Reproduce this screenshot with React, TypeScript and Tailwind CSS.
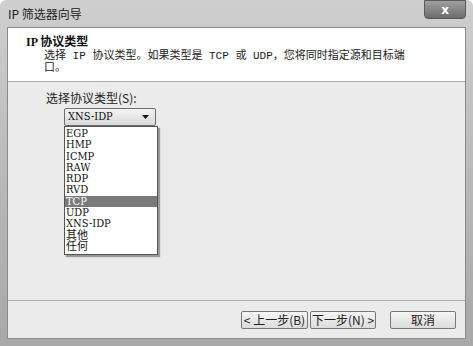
const items = ['EGP', 'HMP', 'ICMP', 'RAW', 'RDP', 'RVD', 'TCP', 'UDP', 'XNS-IDP', '其他', '任何']

const serif = "font-['DejaVu_Serif','Noto_Sans_CJK_SC',serif] font-stretch-condensed"
const btn =
  "h-[18px] border border-[#777] rounded-[2px] bg-gradient-to-b from-[#f6f6f6] to-[#dcdcdc] text-[12px] text-[#222] leading-none font-['Noto_Sans_CJK_SC',sans-serif]"

export default function App() {
  return (
    <div className="w-[473px] h-[346px] flex flex-col bg-gradient-to-b from-[#cfcfcf] via-[#b9b9b9] to-[#a8a8a8] rounded-t-md overflow-hidden">
      {/* Title bar */}
      <div className="h-[27px] flex items-center justify-between pl-[8px] pr-[7px]">
        <span className="text-[12px] text-[#222] font-['Noto_Sans_CJK_SC',sans-serif]">IP 筛选器向导</span>
        <div className="w-[42px] h-[19px] -mt-[8px] rounded-b-[4px] border border-[#5a5a5a] bg-gradient-to-b from-[#a0a0a0] to-[#6c6c6c] flex items-center justify-center">
          <span className="text-white text-[12px] font-bold font-['DejaVu_Sans'] leading-none">x</span>
        </div>
      </div>

      {/* Client area */}
      <div className="flex-1 mx-[7px] mb-[7px] flex flex-col border border-[#8a8a8a] bg-[#ebebeb]">
        {/* Header */}
        <div className="h-[54px] bg-white border-b border-[#a9a9a9] pl-[18px] pt-[6px]">
          <div className="text-[12px] font-bold text-[#111] leading-[16px] font-['Liberation_Serif','Noto_Sans_CJK_SC',serif]">
            IP 协议类型
          </div>
          <div className="pl-[18px] text-[11px] leading-[12px] text-[#222] font-['Liberation_Mono','Noto_Sans_CJK_SC',monospace]">
            选择 IP 协议类型。如果类型是 TCP 或 UDP，您将同时指定源和目标端
            <br />
            口。
          </div>
        </div>

        {/* Body */}
        <div className="flex-1 pl-[38px] pt-[9px]">
          <div className="text-[12px] text-[#222] leading-[14px] font-['Noto_Sans_CJK_SC',sans-serif]">选择协议类型(S):</div>
          <div className="relative ml-[18px] mt-[3px] w-[92px]">
            <div className="h-[18px] border border-[#6d6d6d] rounded-[2px] bg-gradient-to-b from-[#f4f4f4] to-[#d9d9d9] flex items-center justify-between pl-[3px] pr-[6px]">
              <span className={`text-[11px] text-[#111] ${serif}`}>XNS-IDP</span>
              <svg width="7" height="4" viewBox="0 0 7 4"><path d="M0 0h7L3.5 4z" fill="#111" /></svg>
            </div>
            <div className="absolute left-0 top-[18px] w-[94px] bg-white border border-[#555] shadow-[2px_2px_1px_rgba(0,0,0,0.35)] pt-[1px] pb-[2px]">
              {items.map(it => (
                <div
                  key={it}
                  className={`h-[11.3px] pl-[1px] text-[11px] leading-[11px] ${serif} ${it === 'TCP' ? 'bg-[#7a7a7a] text-white' : 'text-[#111]'}`}
                >
                  {it}
                </div>
              ))}
            </div>
          </div>
        </div>

        {/* Footer */}
        <div className="h-[38px] border-t border-[#a9a9a9] flex items-center justify-end pr-[9px] gap-[14px]">
          <div className="flex gap-[2px]">
            <button className={`w-[67px] ${btn}`}>&lt; 上一步(B)</button>
            <button className={`w-[66px] ${btn}`}>下一步(N) &gt;</button>
          </div>
          <button className={`w-[66px] ${btn}`}>取消</button>
        </div>
      </div>
    </div>
  )
}
